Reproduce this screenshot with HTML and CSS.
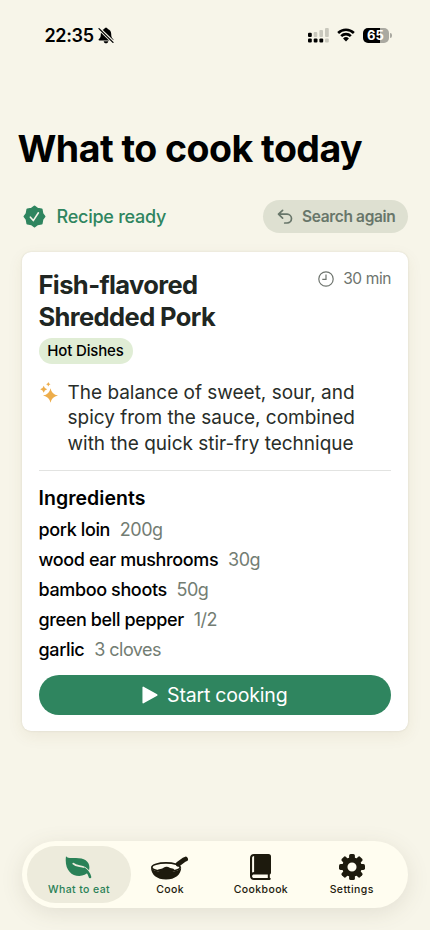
FILE: index.html
```html
<!DOCTYPE html>
<html lang="en">
<head>
<meta charset="utf-8">
<title>What to cook today</title>
<link rel="stylesheet" href="styles.css">
</head>
<body>
<div class="screen">
  <header class="status">
    <div class="status-time">
      <span class="time">22:35</span>
      <svg class="bell" width="16" height="17" viewBox="0 0 16 17">
        <path d="M8 .7c.9 0 1.600.5 1.700 1.300 2.200.8 3.500 2.500 3.500 4.900 0 3 .6 3.900 1.900 5 .6.6.4 1.500-.6 1.500H1.500c-1 0-1.200-.9-.6-1.500 1.300-1.100 1.900-2 1.900-5C2.800 4.500 4.100 2.800 6.300 2 6.400 1.200 7.100.7 8 .7zM5.700 14.200h4.600c-.2 1.300-1.100 2.100-2.300 2.100s-2.100-.8-2.300-2.100z"/>
        <path class="slash-gap" d="M.6 1.200 15 15"/>
        <path class="slash" d="M1 1.600 15 15.400"/>
      </svg>
    </div>
    <div class="status-icons">
      <svg class="signal" width="21" height="15" viewBox="0 0 21 15">
        <g class="dim"><rect x="5.700" y="4" width="3.600" height="5" rx="1"/><rect x="11.400" y="2" width="3.600" height="7" rx="1"/><rect x="17" y="0" width="3.800" height="9" rx="1"/><rect x="17" y="10.500" width="3.800" height="4" rx="1"/></g>
        <rect x="0" y="4.800" width="3.800" height="4.200" rx="1.100"/><rect x="0" y="10.500" width="3.800" height="4" rx="1.100"/><rect x="5.700" y="10.500" width="3.800" height="4" rx="1.100"/><rect x="11.400" y="10.500" width="3.800" height="4" rx="1.100"/>
      </svg>
      <svg class="wifi" width="18" height="14" viewBox="0 0 19 14">
        <path class="wave" d="M1.200 4.900a11.800 11.800 0 0 1 16.600 0M4.400 8.200a7.200 7.200 0 0 1 10.200 0"/>
        <path d="M9.500 13.800 6.400 10.700a4.400 4.400 0 0 1 6.200 0z"/>
      </svg>
      <div class="battery"><span>65</span></div>
      <i class="battery-cap"></i>
    </div>
  </header>

  <h1>What to cook today</h1>

  <div class="result-bar">
    <div class="ready">
      <svg width="23" height="23" viewBox="0 0 23 23">
        <path class="seal" d="M11.500 1.500 14.500 3.700 18.600 4.400 19.300 8.500 21.500 11.500 19.300 14.500 18.600 18.600 14.500 19.300 11.500 21.500 8.500 19.300 4.400 18.600 3.700 14.500 1.500 11.500 3.700 8.500 4.400 4.400 8.500 3.700z"/>
        <path class="check" d="M7.400 12.200 10.300 15.600 15.400 7.800"/>
      </svg>
      <span>Recipe ready</span>
    </div>
    <button class="again">
      <svg width="16" height="16" viewBox="0 0 16 16"><path d="M5.600 1.300 1.500 5.200l4.100 3.900M1.800 5.200h8.300a4.300 4.300 0 0 1 0 8.800H7.700"/></svg>
      <span>Search again</span>
    </button>
  </div>

  <main class="card">
    <div class="card-head">
      <h2>Fish-flavored<br>Shredded Pork</h2>
      <div class="duration">
        <svg width="16" height="16" viewBox="0 0 16 16"><circle cx="8" cy="8" r="7.200"/><path d="M8 3.400V8.300H4.300"/></svg>
        <span>30 min</span>
      </div>
    </div>
    <span class="tag">Hot Dishes</span>
    <div class="summary">
      <svg width="18" height="21" viewBox="0 0 18 21">
        <path d="M10.500 6.200Q11.600 12.300 18 13.500 11.600 14.700 10.500 20.800 9.400 14.700 3 13.500 9.400 12.300 10.500 6.200zM3.700 3.700Q4.300 6.500 7.200 7.200 4.300 7.900 3.700 10.700 3.100 7.900.2 7.200 3.100 6.500 3.700 3.700zM8.300 0Q8.700 1.900 10.500 2.300 8.700 2.700 8.300 4.600 7.900 2.700 6.100 2.300 7.900 1.900 8.300 0z"/>
      </svg>
      <p>The balance of sweet, sour, and<br>spicy from the sauce, combined<br>with the quick stir-fry technique</p>
    </div>
    <hr>
    <h3>Ingredients</h3>
    <ul>
      <li><b>pork loin</b><span>200g</span></li>
      <li><b>wood ear mushrooms</b><span>30g</span></li>
      <li><b>bamboo shoots</b><span>50g</span></li>
      <li><b>green bell pepper</b><span>1/2</span></li>
      <li><b>garlic</b><span>3 cloves</span></li>
    </ul>
    <button class="start">
      <svg width="16" height="18" viewBox="0 0 16 18"><path d="M1.200 1.300v15.400L14.800 9z"/></svg>
      <span>Start cooking</span>
    </button>
  </main>

  <nav class="tabs">
    <a class="tab active">
      <svg width="28" height="26" viewBox="0 0 28 26">
        <path d="M1 2.300C2.800 4.500 6 4 11 4c8 0 13.400 3.200 13.400 9.300 0 1.700-.3 3.200-.9 4.300C21.500 20.500 18.300 22 14.300 22 5.500 22-.7 14.500 1 2.300z"/>
        <path class="vein" d="M8.300 9.700c3 3.200 7.700 1.800 11.500 4 2.300 1.300 4.500 4 5.400 7"/>
        <path class="stem" d="M19.300 14.800c2.600 1.600 4.800 4.600 5.700 8.200"/>
      </svg>
      <span>What to eat</span>
    </a>
    <a class="tab">
      <svg width="38" height="26" viewBox="0 0 38 26">
        <path class="handle" d="M27 10.200 33 5.800 34.600 5.100"/>
        <ellipse class="rim" cx="15" cy="13.200" rx="14.200" ry="4.300"/>
        <path d="M0 13.500C0 20.500 6 25.600 15 25.600s15.200-5.100 15.200-12.100c-2 3.300-7.700 4.700-15.200 4.700S2 16.800 0 13.500z"/>
        <path d="M6.500 16.500c.8-1.800 2.500-1.300 4-1.800 2.200-.8 3-2.200 5.300-2 2.200.1 2.800 1.400 4.500 1.600 1.800.1 2.800.8 3.200 2.200l-4 2.500h-9z"/>
      </svg>
      <span>Cook</span>
    </a>
    <a class="tab">
      <svg width="22" height="27" viewBox="0 0 22 27">
        <path fill-rule="evenodd" d="M4 0h14.500a2.500 2.500 0 0 1 2.500 2.500v16c0 1-.5 1.700-1.200 2v3.200c.6.200 1 .5 1 1.100 0 .7-.5 1.200-1.200 1.200H4c-2.400 0-4-1.600-4-4V4c0-2.400 1.600-4 4-4zM2.100 18.500c.6-.3 1.200-.5 2-.5V2c-1.200.1-2 .9-2 2zM4 20.500c-1.200 0-1.900.7-1.900 1.700S2.800 24 4 24h13.800v-3.500z"/>
      </svg>
      <span>Cookbook</span>
    </a>
    <a class="tab">
      <svg width="26" height="26" viewBox="-13 -13 26 26">
        <g><rect id="tooth" x="-2.900" y="-13" width="5.800" height="7" rx="1.600"/><use href="#tooth" transform="rotate(45)"/><use href="#tooth" transform="rotate(90)"/><use href="#tooth" transform="rotate(135)"/><use href="#tooth" transform="rotate(180)"/><use href="#tooth" transform="rotate(225)"/><use href="#tooth" transform="rotate(270)"/><use href="#tooth" transform="rotate(315)"/></g>
        <circle class="gear" r="7.200"/>
      </svg>
      <span>Settings</span>
    </a>
  </nav>
</div>
</body>
</html>
```
FILE: styles.css
```css
* { box-sizing: border-box; }
body {
  margin: 0;
  background: #f7f5e9;
  font-family: Inter, "Liberation Sans", sans-serif;
  color: #000;
}
h1, h2, h3, p, ul { margin: 0; padding: 0; }
svg { display: block; flex: none; }
button { border: 0; font-family: inherit; }
span, b { white-space: nowrap; }

.screen {
  width: 430px;
  height: 930px;
  display: flex;
  flex-direction: column;
  overflow: hidden;
}

.status {
  height: 70px;
  padding: 0 38.500px 0 44.500px;
  display: flex;
  align-items: center;
  justify-content: space-between;
}
.status-time { display: flex; align-items: center; gap: 4.500px; }
.time { font-size: 18px; font-weight: 600; letter-spacing: -0.350px; }
.slash { stroke: #000; stroke-width: 1.3; stroke-linecap: round; }
.slash-gap { stroke: #f7f5e9; stroke-width: 3.2; }
.status-icons { display: flex; align-items: center; }
.signal { margin-right: 8px; }
.signal .dim { fill: #c9c8bd; }
.wifi { margin-right: 7.500px; }
.wave { fill: none; stroke: #000; stroke-width: 2.7; }
.battery {
  width: 26px;
  height: 15px;
  border-radius: 5px;
  background: linear-gradient(90deg, #000 65%, #aaa9a1 65%);
  color: #fff;
  font-size: 13px;
  line-height: 15px;
  font-weight: 700;
  text-align: center;
}
.battery-cap { width: 2px; height: 5px; margin-left: 1px; border-radius: 0 2px 2px 0; background: #aaa9a1; }

h1 {
  margin: 55px 0 0 17.500px;
  font-size: 37.500px;
  line-height: 48px;
  font-weight: 700;
  letter-spacing: -0.540px;
  white-space: nowrap;
}

.result-bar {
  margin: 27px 22px 0 23px;
  height: 33px;
  display: flex;
  align-items: center;
  justify-content: space-between;
}
.ready { display: flex; align-items: center; gap: 10.500px; color: #2f855f; font-size: 18px; font-weight: 500; letter-spacing: -.250px; }
.seal { fill: #2f855f; stroke: #2f855f; stroke-width: 2; stroke-linejoin: round; }
.check { fill: none; stroke: #f7f5e9; stroke-width: 1.600; stroke-linecap: round; stroke-linejoin: round; }
.again {
  width: 145px;
  height: 33px;
  padding: 0 0 0 14px;
  display: flex;
  align-items: center;
  gap: 9px;
  border-radius: 17px;
  background: #dee0d1;
  color: #68766a;
  font-size: 15.500px;
  font-weight: 600;
  letter-spacing: -.350px;
}
.again svg { fill: none; stroke: #68766a; stroke-width: 1.700; stroke-linecap: round; stroke-linejoin: round; }

.card {
  margin: 19px 22px 0;
  height: 479px;
  padding: 17px 17px 0 16.500px;
  border-radius: 9px;
  background: #fff;
  box-shadow: 0 0 2px rgba(80, 75, 50, .16), 0 5px 16px rgba(110, 95, 40, .08);
  display: flex;
  flex-direction: column;
}
.card-head { display: flex; justify-content: space-between; }
h2 { font-size: 25.500px; line-height: 32px; font-weight: 700; color: #202622; letter-spacing: -.600px; }
.duration { display: flex; align-items: center; gap: 9.500px; height: 19px; color: #6e746e; font-size: 15.500px; letter-spacing: -.4px; }
.duration svg { fill: none; stroke: #6e746e; stroke-width: 1.200; }
.tag {
  align-self: flex-start;
  margin-top: 5px;
  width: 94px;
  height: 26px;
  line-height: 26px;
  border-radius: 13px;
  background: #e0edd5;
  text-align: center;
  font-size: 15px;
  font-weight: 500;
  letter-spacing: -.150px;
}
.summary { display: flex; gap: 10px; margin-top: 15.500px; padding-left: 1px; }
.summary svg { margin-top: 2px; fill: #edad4b; }
.summary p { font-size: 19px; line-height: 25.700px; color: #282d29; white-space: nowrap; letter-spacing: -.01px; }
hr { width: 100%; height: 1px; margin: 13.500px 0 0; border: 0; background: #e2e3e1; }
h3 { margin-top: 14px; font-size: 19.500px; line-height: 26px; font-weight: 600; letter-spacing: .05px; }
ul { list-style: none; margin-top: 3px; }
li { height: 30.100px; display: flex; align-items: center; gap: 9.800px; font-size: 18px; }
li b { font-weight: 500; letter-spacing: -.370px; }
li span { color: #737d73; letter-spacing: -.520px; }
.start {
  width: 352.500px;
  height: 39.500px;
  margin-top: 10.500px;
  padding: 0;
  display: flex;
  align-items: center;
  justify-content: center;
  gap: 9px;
  border-radius: 20px;
  background: #2f855f;
  color: #fff;
  font-size: 19.500px;
  letter-spacing: -.200px;
}
.start svg { fill: #fff; stroke: #fff; stroke-width: 1.500; stroke-linejoin: round; }

.tabs {
  margin: 110px 22px 0;
  width: 386px;
  height: 67px;
  padding: 5px;
  display: flex;
  border-radius: 34px;
  background: #fffdf0;
  box-shadow: 0 5px 22px rgba(90, 85, 60, .13);
  color: #1d1a0d;
}
.tab {
  width: 90.800px;
  height: 57px;
  padding: 8px 0 6px;
  display: flex;
  flex-direction: column;
  align-items: center;
  justify-content: space-between;
  font-size: 10.500px;
  line-height: 14px;
  font-weight: 550;
  letter-spacing: .400px;
}
.tab svg { fill: #1d1a0d; }
.tab.active { width: 104px; margin-right: -6.300px; border-radius: 29px; background: #edebdc; color: #2a8157; }
.tab.active svg { fill: #2a8157; }
.tab .vein { fill: none; stroke: #edebdc; stroke-width: 1.800; stroke-linecap: round; }
.tab .stem { fill: none; stroke: #2a8157; stroke-width: 2.600; stroke-linecap: round; }
.tab .rim { fill: none; stroke: #1d1a0d; stroke-width: 1.600; }
.handle { fill: none; stroke: #1d1a0d; stroke-width: 4.800; stroke-linecap: round; }
.tab .gear { fill: none; stroke: #1d1a0d; stroke-width: 5.300; }
```
